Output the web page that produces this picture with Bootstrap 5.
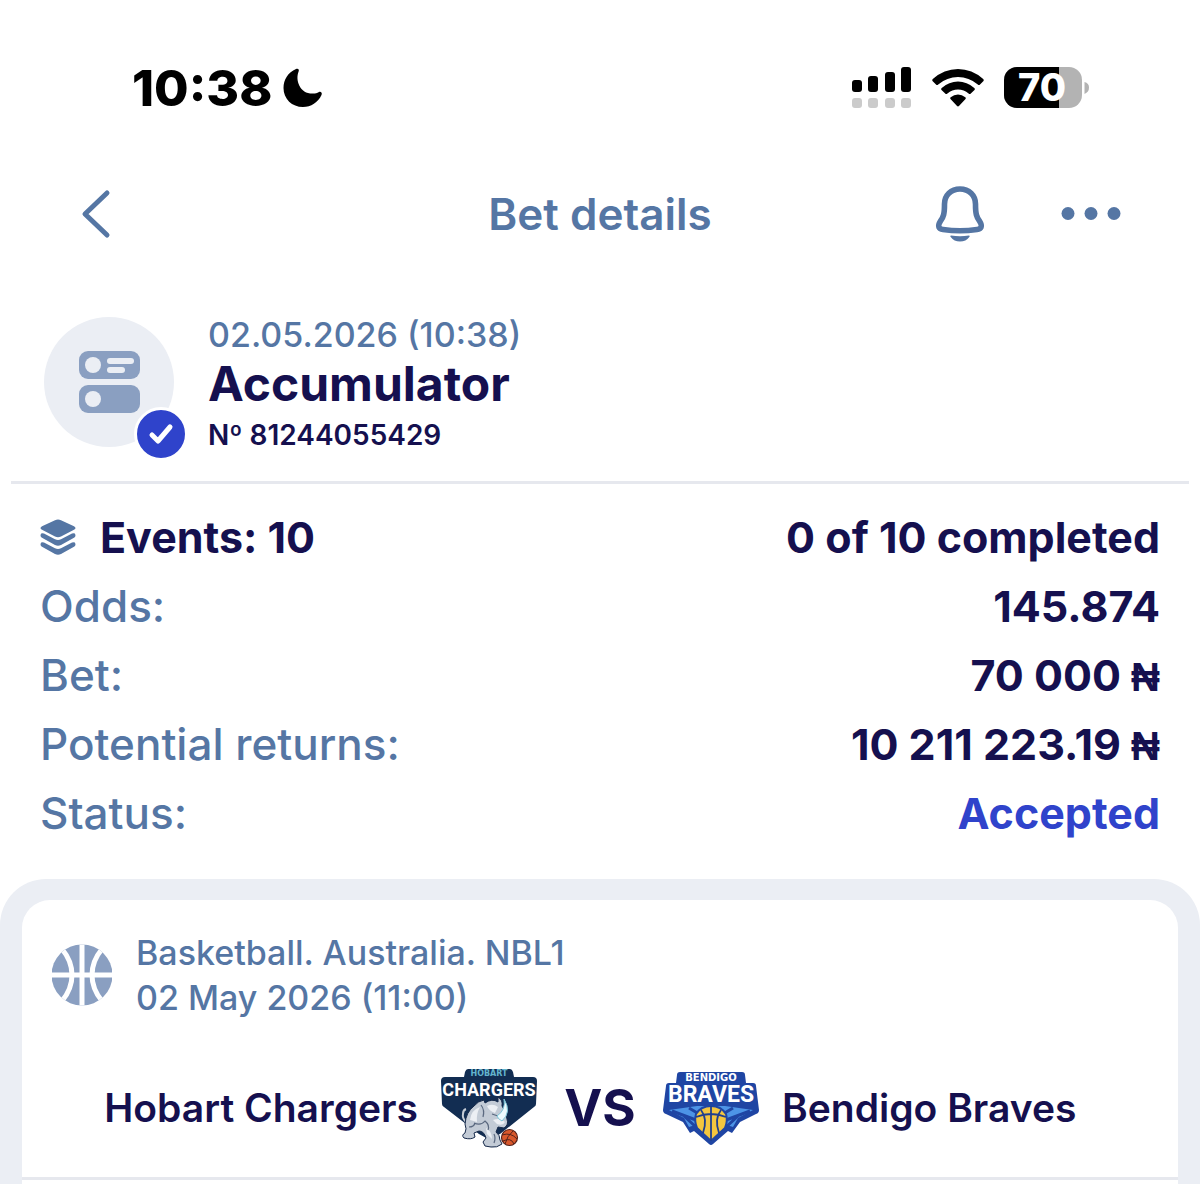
<!DOCTYPE html>
<html lang="en">
<head>
<meta charset="utf-8">
<meta name="viewport" content="width=device-width, initial-scale=1">
<title>Bet details</title>
<link href="https://cdn.jsdelivr.net/npm/bootstrap@5.3.0/dist/css/bootstrap.min.css" rel="stylesheet">
<style>
  :root { --navy: #15104f; --slate: #5576a4; --soft: #8a9fc1; --haze: #ebeef4; --royal: #2f43cb; }
  body { font-family: Inter, "Liberation Sans", sans-serif; background: #fff; color: var(--navy); font-weight: 600; }
  svg { display: block; flex: none; overflow: visible; }
  .slate { color: var(--slate); }
  .semi { font-weight: 600; }
  .medium { font-weight: 500; }
  .status-bar { height: 156px; padding: 20px 110px 0 132px; color: #000; }
  .clock { font-size: 50px; font-weight: 800; line-height: 56px; }
  .status-icons { gap: 20px; }
  .title-bar { height: 116px; padding: 0 64px; display: grid; grid-template-columns: 1fr auto 1fr; align-items: center; }
  .title-bar h1 { font-size: 44px; line-height: 52px; }
  .icon-btn { border: 0; background: none; padding: 0; width: 64px; height: 64px; display: flex; align-items: center; justify-content: center; }
  .title-actions { gap: 67px; margin-right: 13px; }
  .bet-summary { padding: 45px 44px 26px; gap: 34px; }
  .bet-avatar { width: 130px; height: 130px; background: var(--haze); }
  .tick-badge { right: -14px; bottom: -14px; width: 54px; height: 54px; border: 3px solid #fff; background: var(--royal); }
  .bet-date { font-size: 34px; line-height: 36px; }
  .bet-kind { font-size: 48px; line-height: 62px; font-weight: 700; }
  .bet-number { font-size: 28px; line-height: 40px; }
  .rule { height: 3px; background: #e6e8ee; }
  .summary-rule { margin: 0 11px; }
  .facts { padding: 19px 40px 31px; font-size: 43px; line-height: 69px; }
  .facts dt, .facts dd { font-weight: 700; margin: 0; }
  .facts dt.slate { font-size: 44px; font-weight: 500; }
  .naira { font-family: "Liberation Sans", sans-serif; font-size: 40px; line-height: 1; }
  .royal { color: var(--royal); }
  .event-panel { background: var(--haze); border-radius: 46px 46px 0 0; padding: 21px 22px 0; }
  .event-card { background: #fff; border-radius: 28px 28px 0 0; }
  .event-head { padding: 30px 30px 0; gap: 24px; font-size: 34px; line-height: 45px; }
  .versus { padding: 48px 0 29px; font-size: 39px; line-height: 48px; }
  .side { flex: 1 1 0; gap: 23px; }
  .vs { font-size: 51px; font-weight: 700; width: 126px; }
  .crest-wide { font-family: "DejaVu Sans", sans-serif; font-weight: 700; text-anchor: middle; }
  .crest-tall { font-family: Roboto, "Liberation Sans", sans-serif; font-weight: 700; text-anchor: middle; }
</style>
<script src="https://cdn.jsdelivr.net/npm/bootstrap@5.3.0/dist/js/bootstrap.bundle.min.js"></script>
</head>
<body class="d-flex flex-column min-vh-100">

<div class="status-bar d-flex align-items-center justify-content-between">
  <div class="d-flex align-items-center gap-2">
    <span class="clock">10:38</span>
    <svg width="44" height="40" viewBox="0 0 44 40" aria-hidden="true"><path d="M16 1C18 0 19.500 1.500 18.600 3.400C15 12 20 26 33 25.600C35.500 25.500 37 25 39 24C41 23.300 42.500 25 41.500 27C38 34.500 31 39 23 39C12 39 3.500 31 3.500 20C3.500 11.500 8 4.500 16 1Z"/></svg>
  </div>
  <div class="status-icons d-flex align-items-center">
    <svg width="61" height="42" viewBox="0 0 61 42" aria-hidden="true">
      <rect x="1" y="13" width="10" height="12" rx="3"/><rect x="17" y="9" width="10" height="16" rx="3"/><rect x="34" y="5" width="10" height="20" rx="3"/><rect x="50" y="0" width="10" height="25" rx="3"/>
      <g fill="#cbcbcb"><rect x="1" y="31" width="10" height="10" rx="3"/><rect x="17" y="31" width="10" height="10" rx="3"/><rect x="34" y="31" width="10" height="10" rx="3"/><rect x="50" y="31" width="10" height="10" rx="3"/></g>
    </svg>
    <svg width="52" height="40" viewBox="0 0 52 40" aria-hidden="true">
      <path d="M0.500 13Q-0.300 12 .8 11Q12 1 26 1Q40 1 51.200 11Q52.300 12 51.500 13L48 16.500Q47 17.500 45.800 16.500Q37 9 26 9Q15 9 6.200 16.500Q5 17.500 4 16.500Z"/>
      <path d="M9.500 22Q8.500 21 9.700 20Q17 13.500 26 13.500Q35 13.500 42.300 20Q43.500 21 42.500 22L38.800 25.500Q37.800 26.500 36.600 25.500Q32 21.500 26 21.500Q20 21.500 15.400 25.500Q14.200 26.500 13.200 25.500Z"/>
      <path d="M18.500 31Q17.600 30 18.700 29.200Q22 26.500 26 26.500Q30 26.500 33.300 29.200Q34.400 30 33.500 31L27.200 37.800Q26 39 24.800 37.800Z"/>
    </svg>
    <svg width="86" height="42" viewBox="0 0 86 42" role="img" aria-label="Battery 70 percent">
      <clipPath id="cell"><rect width="78" height="41" rx="13"/></clipPath>
      <g clip-path="url(#cell)"><rect width="78" height="41" fill="#b3b3b3"/><rect width="55" height="41"/></g>
      <path d="M80.500 15Q85 16 85 20.500T80.500 27Z" fill="#b3b3b3"/>
      <text x="38" y="34" font-size="38" font-weight="800" fill="#fff" text-anchor="middle">70</text>
    </svg>
  </div>
</div>

<header class="title-bar">
  <button class="icon-btn" type="button" aria-label="Back">
    <svg width="30" height="50" viewBox="0 0 30 50" fill="none" stroke="#5576a4" stroke-width="5" stroke-linecap="round" stroke-linejoin="round"><path d="M26 4L4 25L26 46"/></svg>
  </button>
  <h1 class="slate semi m-0">Bet details</h1>
  <div class="title-actions d-flex justify-content-end">
    <button class="icon-btn" type="button" aria-label="Notifications">
      <svg width="50" height="58" viewBox="0 0 50 58"><path d="M25 4C34 4 40.500 10.500 40.500 19C40.500 29 41.500 32 44.500 36C48 41.500 46 44 42 44.500Q25 47 8 44.500C4 44 2 41.500 5.500 36C8.500 32 9.500 29 9.500 19C9.500 10.500 16 4 25 4Z" fill="none" stroke="#5576a4" stroke-width="5.600"/><path d="M16 50.500Q25 52 34 50.500Q35.500 50.500 34.300 52Q31 56.500 25 56.500T15.700 52Q14.500 50.500 16 50.500Z" fill="#5576a4"/></svg>
    </button>
    <button class="icon-btn" type="button" aria-label="More">
      <svg width="62" height="14" viewBox="0 0 62 14" fill="#5576a4"><circle cx="8" cy="6.500" r="6.500"/><circle cx="31" cy="6.500" r="6.500"/><circle cx="54" cy="6.500" r="6.500"/></svg>
    </button>
  </div>
</header>

<main class="d-flex flex-column flex-grow-1">
  <section class="bet-summary d-flex">
    <div class="bet-avatar rounded-circle position-relative d-flex align-items-center justify-content-center flex-shrink-0">
      <svg width="62" height="62" viewBox="0 0 62 62" aria-hidden="true"><g fill="#8a9fc1"><rect x="1" y="0" width="61" height="28" rx="9"/><rect x="1" y="34" width="61" height="28" rx="9"/></g><g fill="#ebeef4"><circle cx="15" cy="14" r="8"/><circle cx="15" cy="48" r="8"/><rect x="29" y="7" width="27" height="6" rx="3"/><rect x="29" y="16" width="18" height="6" rx="3"/></g></svg>
      <span class="tick-badge position-absolute rounded-circle d-flex align-items-center justify-content-center">
        <svg width="26" height="22" viewBox="0 0 26 22" fill="none" stroke="#fff" stroke-width="5" stroke-linecap="round" stroke-linejoin="round" aria-hidden="true"><path d="M4 12L10 18L22 4"/></svg>
      </span>
    </div>
    <div>
      <div class="bet-date slate medium">02.05.2026 (10:38)</div>
      <h2 class="bet-kind m-0">Accumulator</h2>
      <div class="bet-number">Nº 81244055429</div>
    </div>
  </section>

  <div class="rule summary-rule"></div>

  <dl class="facts m-0">
    <div class="d-flex justify-content-between">
      <dt class="d-flex align-items-center gap-4">
        <svg width="36" height="37" viewBox="0 0 36 37" fill="#5576a4" aria-hidden="true"><path d="M15 1.200Q18 -.3 21 1.200L34 7.200Q37 9 34 10.800L21 17.600Q18 19 15 17.600L2 10.800Q-1 9 2 7.200Z"/><path id="layer" d="M1.200 14.400Q2.500 13.800 4 14.600L15 20.300Q18 21.800 21 20.300L32 14.600Q33.500 13.800 34.800 14.400Q36.500 17 34 18.800L21 26Q18 27.500 15 26L2 18.800Q-.5 17 1.200 14.400Z"/><use href="#layer" y="9"/></svg>
        Events: 10
      </dt>
      <dd>0 of 10 completed</dd>
    </div>
    <div class="d-flex justify-content-between"><dt class="slate">Odds:</dt><dd>145.874</dd></div>
    <div class="d-flex justify-content-between"><dt class="slate">Bet:</dt><dd>70 000 <span class="naira">₦</span></dd></div>
    <div class="d-flex justify-content-between"><dt class="slate">Potential returns:</dt><dd>10 211 223.19 <span class="naira">₦</span></dd></div>
    <div class="d-flex justify-content-between"><dt class="slate">Status:</dt><dd class="royal">Accepted</dd></div>
  </dl>

  <section class="event-panel d-flex flex-column flex-grow-1">
    <article class="event-card flex-grow-1">
      <div class="event-head d-flex align-items-center slate medium">
        <svg width="60" height="62" viewBox="0 0 60 62" aria-hidden="true"><clipPath id="ball"><circle cx="30" cy="31" r="30.500"/></clipPath><g clip-path="url(#ball)"><rect width="60" height="62" fill="#8a9fc1"/><g fill="none" stroke="#fff" stroke-width="5"><path d="M30 0V62M0 31H60"/><path d="M10 5Q20 17 20 31T10 57M50 5Q40 17 40 31T50 57"/></g></g></svg>
        <div>
          <div>Basketball. Australia. NBL1</div>
          <div>02 May 2026 (11:00)</div>
        </div>
      </div>
      <div class="versus d-flex align-items-center justify-content-center">
        <div class="side d-flex align-items-center justify-content-end">
          <span>Hobart Chargers</span>
          <svg width="96" height="80" viewBox="0 0 96 80" role="img" aria-label="Hobart Chargers crest">
            <path d="M27 1H69Q71 1 72 4L73 9H92Q96 9 96 13L95 36Q95 38 93 39L59 66L47 71L38 66L3 39Q1 38 1 36L0 13Q0 9 4 9H23L24 4Q25 1 27 1Z" fill="#122d52"/>
            <text class="crest-wide" x="48" y="8" font-size="8" fill="#63b4cd">HOBART</text>
            <text class="crest-tall" x="48" y="28" font-size="18" fill="#fff">CHARGERS</text>
            <g stroke="#16294a" stroke-linejoin="round">
              <path d="M25 54Q21 50 22 46Q22 42 25 41" fill="none" stroke="#c5ccd6" stroke-width="2"/>
              <path d="M24 56Q25 44 33 38Q37 33 43 32L44 35Q51 30 57 34L57 29Q62 32 61 38Q65 43 66 51Q68 57 63 60L57 59L55 64Q59 67 59 72L61 76Q56 80 50 79L44 78L42 74L45 70Q43 63 38 63L33 65L34 69Q30 72 23 70Q20 67 24 65Q26 61 24 56Z" fill="#c3cbd6" stroke-width="1"/>
              <path d="M29 52Q30 42 39 39Q35 46 36 54ZM46 38Q52 35 57 39L54 45Q48 43 46 38ZM52 52Q59 49 64 54Q62 58 56 56ZM45 60Q51 63 51 71L46 66Z" fill="#eceff4" stroke="none"/>
              <path d="M40 37Q44 42 42 49M33 55Q40 58 44 53Q49 57 47 62M51 46L57 48M28 59Q33 59 34 55M53 66Q55 70 53 75" fill="none" stroke="#5b6980" stroke-width="1.200"/>
              <path d="M63 31Q71 44 61 53Q57 51 56 48Q65 42 63 31Z" fill="#eefafd" stroke="#7cc3d6" stroke-width="1"/>
              <circle cx="68.500" cy="69.500" r="8" fill="#d9582c" stroke="#54221b" stroke-width="1.200"/>
              <path d="M61 67Q70 64 76 71M64 76Q66 68 72 63M62 73Q70 69 73 76" fill="none" stroke="#54221b" stroke-width="1"/>
            </g>
          </svg>
        </div>
        <span class="vs text-center">VS</span>
        <div class="side d-flex align-items-center">
          <svg width="96" height="80" viewBox="0 0 96 80" role="img" aria-label="Bendigo Braves crest">
            <path d="M17 4H79Q82 4 82 7L83 15H90Q93 15 93 18L96 42Q96 45 93 46L77 54L69 65L65 63L50 76Q48 78 46 76L31 63L27 65L20 54L3 46Q0 45 0 42L3 18Q3 15 6 15H13L14 7Q14 4 17 4Z" fill="#1f45a3"/>
            <path d="M6 42L34 38H62L90 42L75 50L70 59L64 57L48 72L32 57L26 59L21 50Z" fill="#4d94e6"/>
            <path d="M9 43L33 52M21 48L34 60M87 43L63 52M75 48L62 60M26 40L36 46M70 40L60 46" stroke="#1f45a3" stroke-width="3"/>
            <path d="M48 38Q58 38 63 46Q65 53 62 60L48 73L34 60Q31 53 33 46Q38 38 48 38Z" fill="#f4c63f" stroke="#1f45a3" stroke-width="2"/>
            <path d="M48 38V73M33 49Q48 43 63 49M38 42Q45 51 40 65M58 42Q51 51 56 65" fill="none" stroke="#1f3f8f" stroke-width="1.800"/>
            <text class="crest-wide" x="48" y="13" font-size="10" fill="#fff">BENDIGO</text>
            <text class="crest-tall" x="48" y="34" font-size="23" fill="#fff">BRAVES</text>
          </svg>
          <span>Bendigo Braves</span>
        </div>
      </div>
      <div class="rule"></div>
    </article>
  </section>
</main>
</body>
</html>
